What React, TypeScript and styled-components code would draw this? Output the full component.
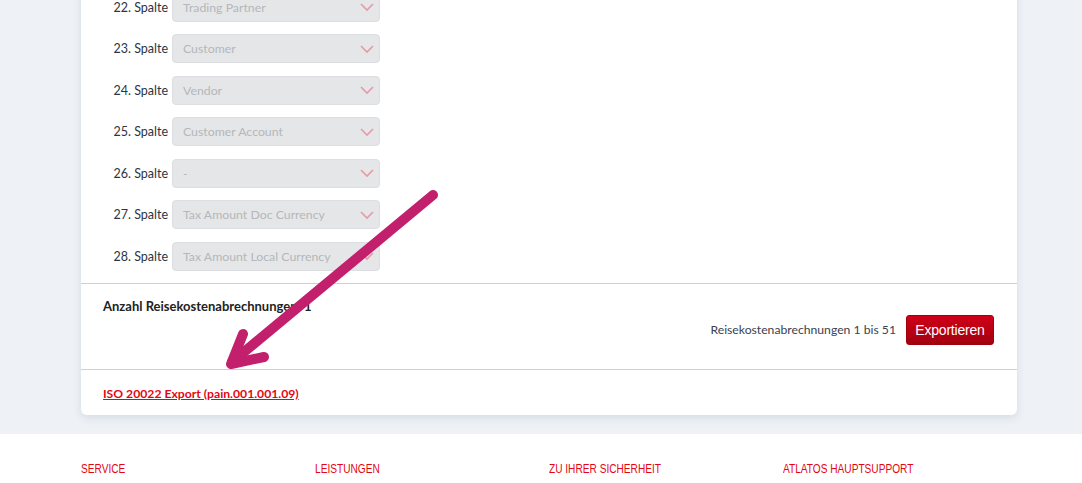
import * as React from 'react';
import styled, { createGlobalStyle } from 'styled-components';

const GlobalStyle = createGlobalStyle`
	html, body {
		margin: 0;
		padding: 0;
		background: #eef2f7;
		font-family: 'Lato', 'Noto Sans', sans-serif;
		overflow: hidden;
	}
`;

const Page = styled.div`
	width: 1082px;
	height: 483px;
	position: relative;
	overflow: hidden;
`;

const Main = styled.div`
	display: flow-root;
	padding: 0 65px 19px 81px;
`;

const Card = styled.div`
	width: 936px;
	margin-top: -20px;
	background: #fff;
	border-radius: 6px;
	box-shadow: 0 3px 8px rgba(40, 60, 90, 0.12);
`;

const ColumnList = styled.div`
	display: flex;
	flex-direction: column;
	gap: 12.5px;
	padding: 12.5px 0 12px 22px;
	border-bottom: 1px solid #cfcfcf;
`;

const Row = styled.div`
	display: flex;
	align-items: center;
	gap: 4px;
`;

const Label = styled.span`
	width: 65px;
	text-align: right;
	font-size: 12.5px;
	color: #2e3440;
	white-space: nowrap;
`;

const Select = styled.div`
	width: 208px;
	height: 29px;
	box-sizing: border-box;
	display: flex;
	align-items: center;
	justify-content: space-between;
	padding: 0 4px 0 10px;
	background: #e5e6e8;
	border: 1px solid #dcdee1;
	border-radius: 4px;
	font-size: 12.3px;
	color: #b4b7bb;
`;

const Summary = styled.div`
	padding: 13px 23px 24px 22px;
	border-bottom: 1px solid #cfcfcf;
`;

const Count = styled.div`
	font-size: 13px;
	font-weight: 700;
	color: #222;
	line-height: 18px;
`;

const ExportRow = styled.div`
	display: flex;
	justify-content: flex-end;
	align-items: center;
	gap: 10px;
`;

const Range = styled.span`
	font-size: 12.2px;
	color: #3a4250;
`;

const ExportButton = styled.button`
	width: 88px;
	height: 30px;
	border: 1px solid #9e000e;
	border-radius: 3px;
	background: linear-gradient(#cf0119, #a3000f);
	color: #fff;
	font-family: 'Liberation Sans', Arial, sans-serif;
	font-size: 14px;
	letter-spacing: -0.2px;
	cursor: pointer;
`;

const LinkBox = styled.div`
	padding: 13px 22px 12px;
	line-height: 18px;
`;

const IsoLink = styled.a`
	font-size: 12.2px;
	font-weight: 700;
	color: #e30613;
	text-decoration: underline;
`;

const Footer = styled.footer`
	background: #fff;
	height: 60px;
	padding: 27px 65px 0 81px;
	display: grid;
	grid-template-columns: repeat(4, 234px);
`;

const FooterHead = styled.span`
	display: block;
	font-family: 'Liberation Sans', Arial, sans-serif;
	font-size: 13.5px;
	color: #e30613;
	text-transform: uppercase;
	white-space: nowrap;
	transform: scaleX(0.75);
	transform-origin: left center;
`;

const Arrow = styled.svg`
	position: absolute;
	left: 0;
	top: 0;
	pointer-events: none;
`;

const Chevron = () => (
	<svg width="16" height="10" viewBox="0 0 16 10">
		<path d="M2 2 L8 8 L14 2" fill="none" stroke="#e69aa6" strokeWidth="1.6" />
	</svg>
);

const columns = [
	['22', 'Trading Partner'],
	['23', 'Customer'],
	['24', 'Vendor'],
	['25', 'Customer Account'],
	['26', '-'],
	['27', 'Tax Amount Doc Currency'],
	['28', 'Tax Amount Local Currency'],
];

const footerLinks = ['Service', 'Leistungen', 'Zu Ihrer Sicherheit', 'Atlatos Hauptsupport'];

const App = () => {
	return (
		<React.Fragment>
			<GlobalStyle />
			<Page>
				<Main>
					<Card>
						<ColumnList>
							{columns.map(([n, value]) => (
								<Row key={n}>
									<Label>{n}. Spalte</Label>
									<Select>
										<span>{value}</span>
										<Chevron />
									</Select>
								</Row>
							))}
						</ColumnList>
						<Summary>
							<Count>Anzahl Reisekostenabrechnungen: 1</Count>
							<ExportRow>
								<Range>Reisekostenabrechnungen 1 bis 51</Range>
								<ExportButton>Exportieren</ExportButton>
							</ExportRow>
						</Summary>
						<LinkBox>
							<IsoLink href="#">ISO 20022 Export (pain.001.001.09)</IsoLink>
						</LinkBox>
					</Card>
				</Main>
				<Footer>
					{footerLinks.map((l) => (
						<FooterHead key={l}>{l}</FooterHead>
					))}
				</Footer>
				{/* Markierungspfeil */}
				<Arrow width="1082" height="483">
					<g stroke="#c2206c" strokeWidth="10" strokeLinecap="round" strokeLinejoin="round" fill="none">
						<path d="M433 195 L232 362" />
						<path d="M243 334 L231 364 L264 357" />
					</g>
				</Arrow>
			</Page>
		</React.Fragment>
	);
};

export default App;
